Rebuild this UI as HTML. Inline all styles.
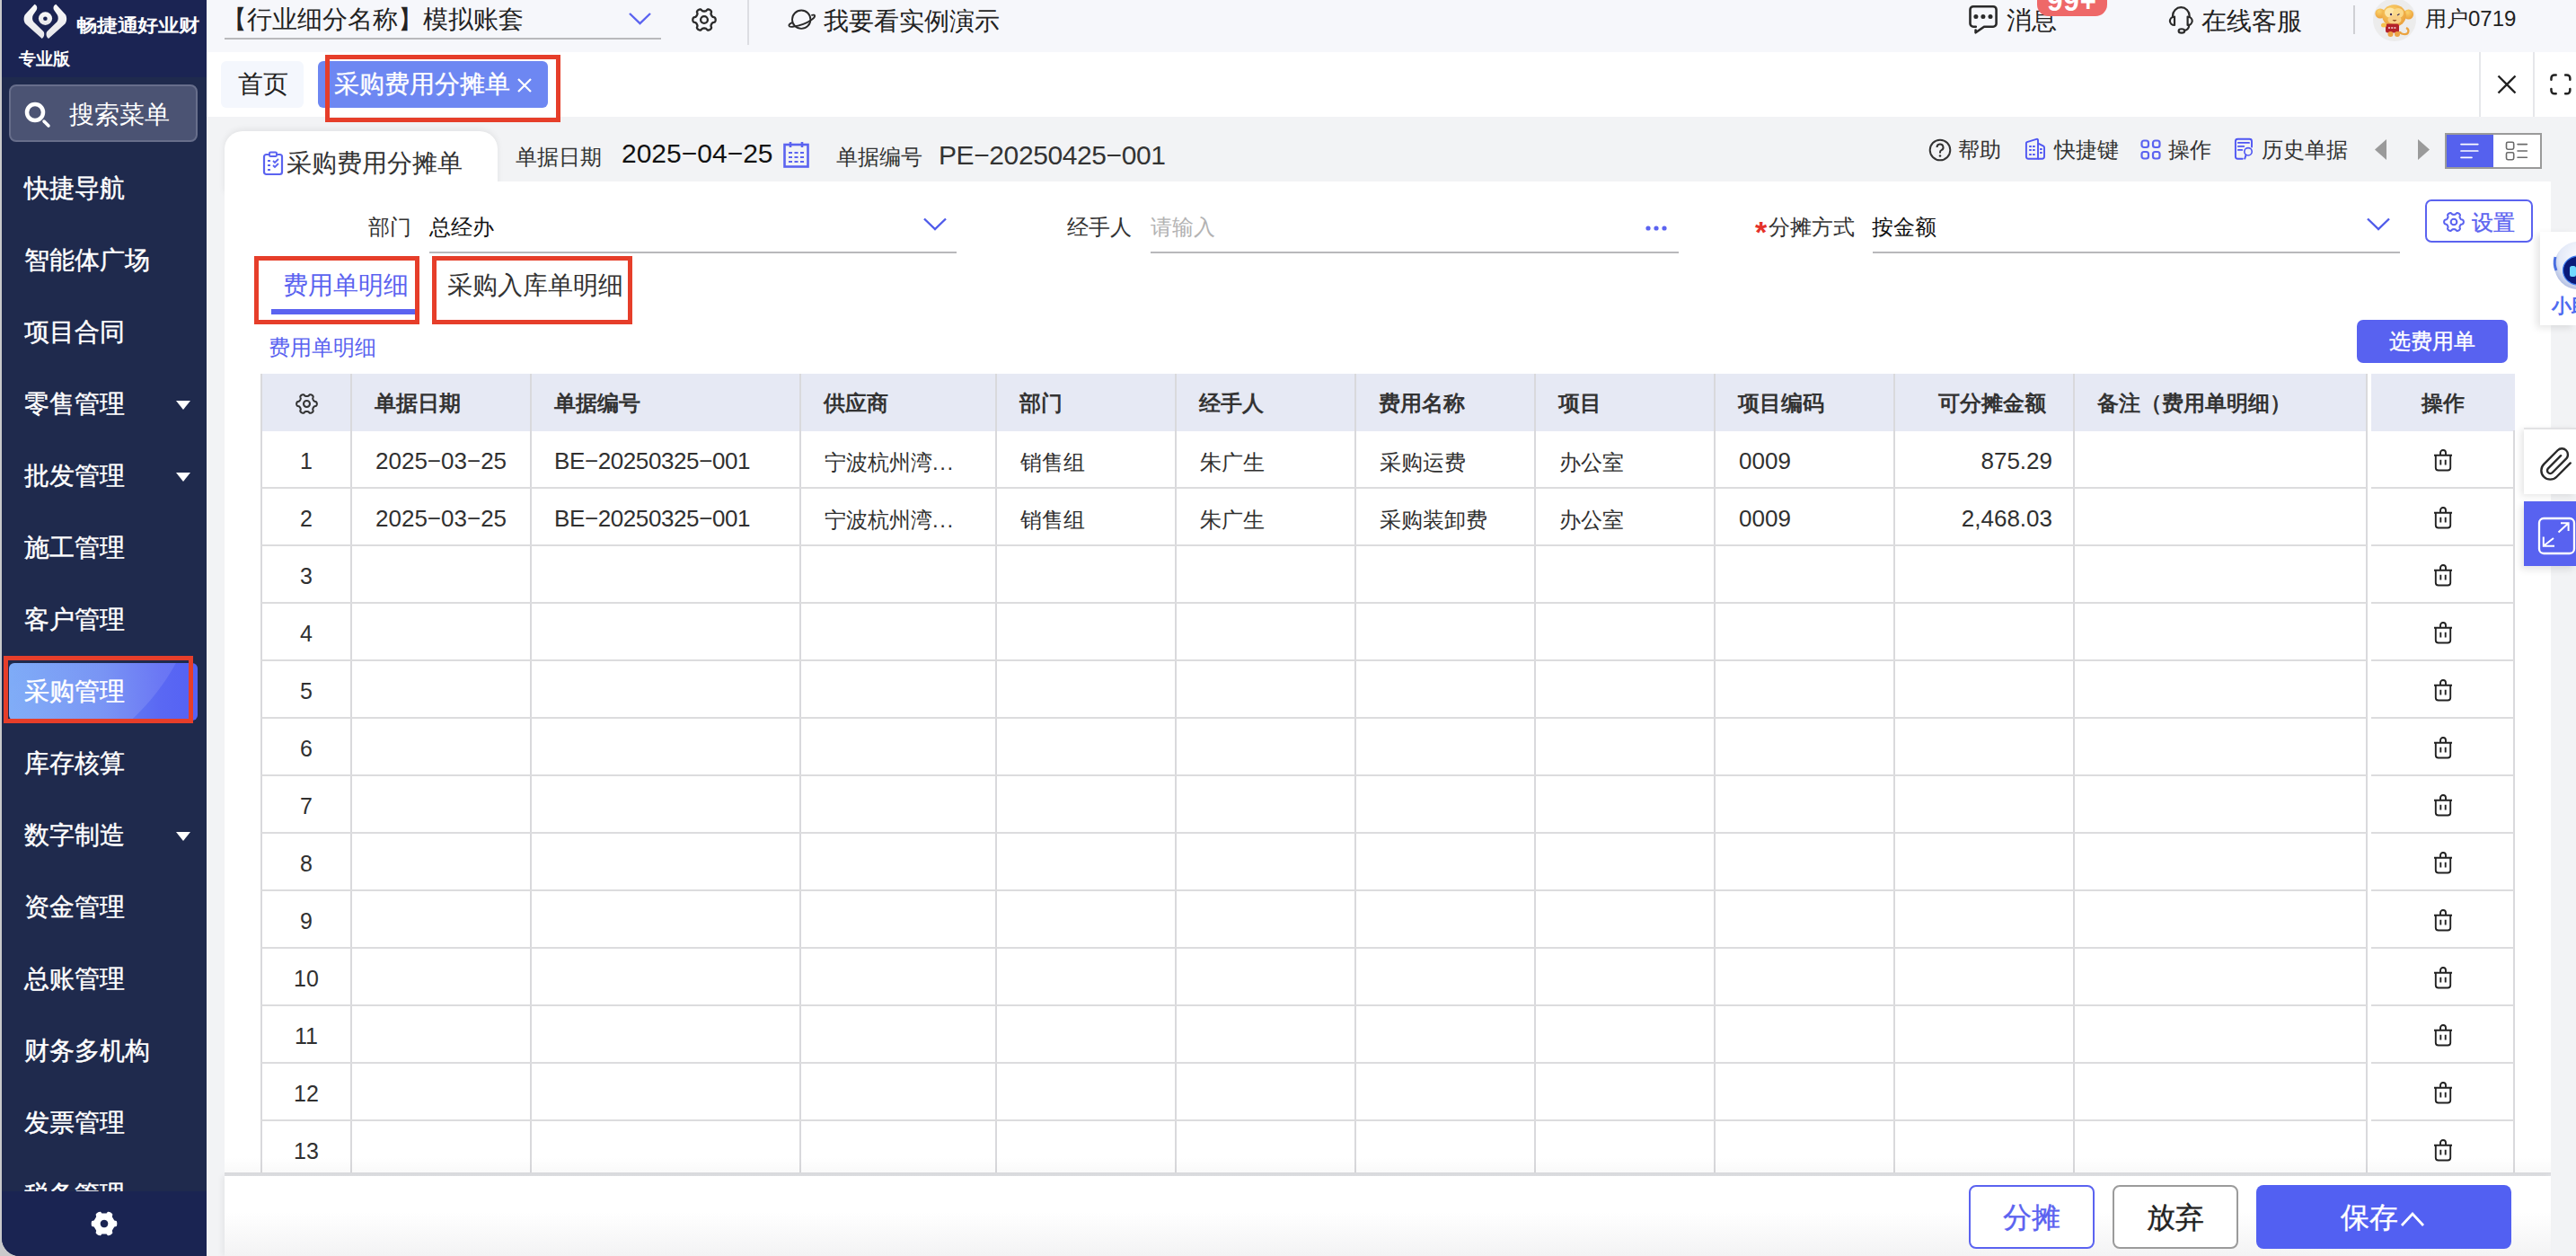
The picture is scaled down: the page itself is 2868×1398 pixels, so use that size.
<!DOCTYPE html>
<html><head><meta charset="utf-8">
<style>
*{margin:0;padding:0;box-sizing:border-box}
html,body{width:2868px;height:1398px;overflow:hidden;background:#f2f3f5;font-family:"Liberation Sans",sans-serif;color:#333;position:relative}
.a{position:absolute;white-space:nowrap}
.t28{font-size:28px;line-height:40px;height:40px}
.t24{font-size:24px;line-height:34px;height:34px}
.w{color:#fff}
.sbm{left:27px;color:#fff;font-size:28px;line-height:40px;height:40px;-webkit-text-stroke:0.4px #fff}
.car{position:absolute;left:196px;width:0;height:0;border-left:8px solid transparent;border-right:8px solid transparent;border-top:10px solid #fff}
.rb{position:absolute;border:5px solid #e63e2a}
</style></head><body>

<!-- SIDEBAR -->
<div class="a" style="left:0;top:0;width:230px;height:1398px;background:#c9c9cb"></div>
<div class="a" id="sb" style="left:2px;top:0;width:228px;height:1398px;background:#1f2a4d;border-bottom-left-radius:20px;overflow:hidden">
  <div class="a" style="left:0;top:0;width:228px;height:86px;background:#1b2453"></div>
  <div class="a" style="left:0;top:1326px;width:228px;height:72px;background:#1a2452"></div>
</div>
<!-- logo -->
<svg class="a" style="left:0;top:0" width="80" height="50" viewBox="0 0 80 50">
  <defs><linearGradient id="lg" x1="0" y1="0" x2="0" y2="1"><stop offset="0" stop-color="#fafafa"/><stop offset="1" stop-color="#e6e6ea"/></linearGradient></defs>
  <path d="M38.5 4.8 C40.8 5.6 42.2 8.6 40.6 11.2 L37 16.6 C35.7 18.6 35.7 22.4 37.3 24.3 L48.1 34.8 C50 36.8 49.6 41.2 46.8 42.9 L28.6 26.7 C26.1 24.2 26 18.6 28.1 16 Z" fill="url(#lg)"/>
  <path d="M62.3 4.8 C60 5.6 58.6 8.6 60.2 11.2 L63.8 16.6 C65.1 18.6 65.1 22.4 63.5 24.3 L52.7 34.8 C50.8 36.8 51.2 41.2 54 42.9 L72.2 26.7 C74.7 24.2 74.8 18.6 72.7 16 Z" fill="url(#lg)"/>
  <ellipse cx="50.5" cy="20.6" rx="7.6" ry="7.3" fill="url(#lg)"/>
  <circle cx="50.4" cy="20.7" r="2.3" fill="#1b2453"/>
</svg>
<div class="a w" style="left:85px;top:13px;font-size:23px;line-height:30px;font-weight:bold;transform:scaleY(0.86);transform-origin:0 15px;letter-spacing:-0.2px">畅捷通好业财</div>
<div class="a w" style="left:21px;top:52px;font-size:19px;line-height:28px;font-weight:bold">专业版</div>
<!-- search -->
<div class="a" style="left:10px;top:94px;width:210px;height:64px;border-radius:8px;background:#4b5373;border:2px solid #676e8b"></div>
<svg class="a" style="left:27px;top:113px" width="30" height="30" viewBox="0 0 30 30">
  <circle cx="12" cy="12" r="9" fill="none" stroke="#fff" stroke-width="4.5"/>
  <path d="M22 22 L27 27" stroke="#fff" stroke-width="3.5" stroke-linecap="round"/>
</svg>
<div class="a w t28" style="left:77px;top:108px">搜索菜单</div>

<!-- menu -->
<div class="a sbm" style="top:190px">快捷导航</div>
<div class="a sbm" style="top:270px">智能体广场</div>
<div class="a sbm" style="top:350px">项目合同</div>
<div class="a sbm" style="top:430px">零售管理</div><div class="car" style="top:446px"></div>
<div class="a sbm" style="top:510px">批发管理</div><div class="car" style="top:526px"></div>
<div class="a sbm" style="top:590px">施工管理</div>
<div class="a sbm" style="top:670px">客户管理</div>
<div class="a" style="left:10px;top:738px;width:210px;height:64px;border-radius:6px;background:linear-gradient(90deg,#6b9ff6 0%,#6685f3 50%,#5a68f3 80%,#5461f4 100%);overflow:hidden">
  <div class="a" style="left:-276px;top:-364px;width:492px;height:492px;border-radius:50%;background:radial-gradient(circle at 62% 90%,rgba(255,255,255,0.16) 0%,rgba(255,255,255,0.07) 45%,rgba(255,255,255,0.03) 100%)"></div>
</div>
<div class="a sbm" style="top:750px">采购管理</div>
<div class="rb" style="left:4px;top:730px;width:211px;height:75px"></div>
<div class="a sbm" style="top:830px">库存核算</div>
<div class="a sbm" style="top:910px">数字制造</div><div class="car" style="top:926px"></div>
<div class="a sbm" style="top:990px">资金管理</div>
<div class="a sbm" style="top:1070px">总账管理</div>
<div class="a sbm" style="top:1150px">财务多机构</div>
<div class="a sbm" style="top:1230px">发票管理</div>
<div class="a" style="left:2px;top:1310px;width:228px;height:16px;overflow:hidden"><div class="a sbm" style="left:25px;top:0px">税务管理</div></div>
<svg class="a" style="left:101px;top:1347px" width="30" height="30" viewBox="0 0 30 30"><path fill="#fff" fill-rule="evenodd" d="M29.3 15.0L29.3 14.4L29.2 13.8L29.1 13.1L28.9 12.6L28.6 12.0L27.5 11.7L26.4 11.4L26.0 11.0L25.7 10.6L25.5 10.1L25.2 9.7L25.0 9.2L24.7 8.8L24.5 8.4L24.2 7.9L24.0 7.5L23.8 7.0L24.1 5.9L24.4 4.8L24.0 4.2L23.6 3.7L23.2 3.3L22.7 2.9L22.2 2.6L21.6 2.3L21.0 2.1L20.4 1.9L19.8 1.8L19.2 1.7L18.3 2.5L17.6 3.4L17.0 3.5L16.5 3.5L16.0 3.5L15.5 3.5L15.0 3.5L14.5 3.5L14.0 3.5L13.5 3.5L13.0 3.5L12.4 3.4L11.7 2.5L10.8 1.7L10.2 1.8L9.6 1.9L9.0 2.1L8.4 2.3L7.9 2.6L7.3 2.9L6.8 3.3L6.4 3.7L6.0 4.2L5.6 4.8L5.9 5.9L6.2 7.0L6.0 7.5L5.8 7.9L5.5 8.4L5.3 8.8L5.0 9.2L4.8 9.7L4.5 10.1L4.3 10.6L4.0 11.0L3.6 11.4L2.5 11.7L1.4 12.0L1.1 12.6L0.9 13.1L0.8 13.8L0.7 14.4L0.7 15.0L0.7 15.6L0.8 16.2L0.9 16.9L1.1 17.4L1.4 18.0L2.5 18.3L3.6 18.6L4.0 19.0L4.3 19.4L4.5 19.9L4.8 20.3L5.0 20.8L5.3 21.2L5.5 21.6L5.8 22.1L6.0 22.5L6.2 23.0L5.9 24.1L5.6 25.2L6.0 25.8L6.4 26.3L6.8 26.7L7.3 27.1L7.8 27.4L8.4 27.7L9.0 27.9L9.6 28.1L10.2 28.2L10.8 28.3L11.7 27.5L12.4 26.6L13.0 26.5L13.5 26.5L14.0 26.5L14.5 26.5L15.0 26.5L15.5 26.5L16.0 26.5L16.5 26.5L17.0 26.5L17.6 26.6L18.3 27.5L19.2 28.3L19.8 28.2L20.4 28.1L21.0 27.9L21.6 27.7L22.1 27.4L22.7 27.1L23.2 26.7L23.6 26.3L24.0 25.8L24.4 25.2L24.1 24.1L23.8 23.0L24.0 22.5L24.2 22.1L24.5 21.6L24.7 21.2L25.0 20.7L25.2 20.3L25.5 19.9L25.7 19.4L26.0 19.0L26.4 18.6L27.5 18.3L28.6 18.0L28.9 17.4L29.1 16.9L29.2 16.2L29.3 15.6Z M15 10.7 a4.3 4.3 0 1 0 0.01 0Z"/></svg>

<!-- TOP BAR -->
<div class="a" style="left:230px;top:0;width:2638px;height:58px;background:#f6f7fb"></div>
<div class="a t28" style="left:247px;top:2px;color:#222">【行业细分名称】模拟账套</div>
<div class="a" style="left:250px;top:42px;width:486px;height:2px;background:#b9b9bc"></div>
<svg class="a" style="left:699px;top:12px" width="27" height="17" viewBox="0 0 27 17"><path d="M2 3 L13.5 14 L25 3" fill="none" stroke="#5b63f0" stroke-width="2.4"/></svg>
<svg class="a" style="left:770px;top:8px" width="28" height="28" viewBox="0 0 28 28"><path d="M26.7 14.0L26.6 13.3L26.5 12.7L26.2 12.1L25.8 11.5L24.7 11.1L23.7 10.9L23.2 10.5L22.8 10.1L22.5 9.7L22.2 9.2L22.0 8.8L21.8 8.3L21.6 7.8L21.5 7.2L21.8 6.2L22.1 5.1L21.8 4.4L21.4 3.8L20.9 3.4L20.4 3.0L19.7 2.7L19.1 2.5L18.4 2.5L17.7 2.5L16.9 3.3L16.1 4.1L15.5 4.3L15.0 4.4L14.5 4.5L14.0 4.5L13.5 4.5L13.0 4.4L12.5 4.3L11.9 4.1L11.1 3.3L10.3 2.5L9.6 2.5L8.9 2.5L8.3 2.7L7.7 3.0L7.1 3.4L6.6 3.8L6.2 4.4L5.9 5.1L6.2 6.2L6.5 7.2L6.4 7.8L6.2 8.3L6.0 8.8L5.8 9.2L5.5 9.7L5.2 10.1L4.8 10.5L4.3 10.9L3.3 11.1L2.2 11.5L1.8 12.1L1.5 12.7L1.4 13.3L1.3 14.0L1.4 14.7L1.5 15.3L1.8 15.9L2.2 16.5L3.3 16.9L4.3 17.1L4.8 17.5L5.2 17.9L5.5 18.3L5.8 18.7L6.0 19.2L6.2 19.7L6.4 20.2L6.5 20.8L6.2 21.8L5.9 22.9L6.2 23.6L6.6 24.2L7.1 24.6L7.6 25.0L8.3 25.3L8.9 25.5L9.6 25.5L10.3 25.5L11.1 24.7L11.9 23.9L12.5 23.7L13.0 23.6L13.5 23.5L14.0 23.5L14.5 23.5L15.0 23.6L15.5 23.7L16.1 23.9L16.9 24.7L17.7 25.5L18.4 25.5L19.1 25.5L19.7 25.3L20.4 25.0L20.9 24.6L21.4 24.2L21.8 23.6L22.1 22.9L21.8 21.8L21.5 20.8L21.6 20.2L21.8 19.7L22.0 19.2L22.2 18.7L22.5 18.3L22.8 17.9L23.2 17.5L23.7 17.1L24.7 16.9L25.8 16.5L26.2 15.9L26.5 15.3L26.6 14.7Z" fill="none" stroke="#2a2a2a" stroke-width="2.3" stroke-linejoin="round"/><circle cx="14" cy="14" r="3.9" fill="none" stroke="#2a2a2a" stroke-width="2.3"/></svg>
<div class="a" style="left:832px;top:0;width:2px;height:50px;background:#dcdde2"></div>
<svg class="a" style="left:876px;top:9px" width="34" height="26" viewBox="0 0 34 26">
  <circle cx="16.2" cy="12.7" r="10.2" fill="none" stroke="#2a2a2a" stroke-width="1.9"/>
  <path d="M5.5 16.3 C1 18.5 1.5 21.5 6.5 20.8 C12 20 22 17 27.5 13 C32.5 9.5 32 6.8 28 7.8" fill="none" stroke="#2a2a2a" stroke-width="1.9" stroke-linecap="round"/>
</svg>
<div class="a t28" style="left:917px;top:4px;color:#222">我要看实例演示</div>

<!-- top right -->
<svg class="a" style="left:2185px;top:0px" width="45" height="45" viewBox="0 0 45 45">
  <path d="M14.8 29.7 H12 a3.5 3.5 0 0 1 -3.5 -3.5 V10.7 a3.5 3.5 0 0 1 3.5 -3.5 H34.1 a3.5 3.5 0 0 1 3.5 3.5 V26.2 a3.5 3.5 0 0 1 -3.5 3.5 H24 L14.6 36.3 V33.6" fill="none" stroke="#2a2a2a" stroke-width="2.6" stroke-linecap="round" stroke-linejoin="round"/>
  <circle cx="14.9" cy="18.5" r="2.5" fill="#2a2a2a"/><circle cx="22.9" cy="18.5" r="2.5" fill="#2a2a2a"/><circle cx="31" cy="18.5" r="2.5" fill="#2a2a2a"/>
</svg>
<div class="a t28" style="left:2234px;top:3px;color:#222">消息</div>
<div class="a" style="left:2268px;top:-12px;width:78px;height:30px;border-radius:13px;background:#ee6868;overflow:hidden"><div class="a" style="left:0;top:-1px;width:78px;text-align:center;color:#fff;font-size:31px;font-weight:bold;line-height:30px;letter-spacing:1px">99+</div></div>
<svg class="a" style="left:2405px;top:0px" width="45" height="45" viewBox="0 0 45 45">
  <path d="M14 19.5 V17.5 a9.3 9.3 0 0 1 18.6 0 V19.5" fill="none" stroke="#2a2a2a" stroke-width="2.2"/>
  <path d="M16 18.6 V28 A5.1 4.7 0 0 1 16 18.6Z" fill="none" stroke="#2a2a2a" stroke-width="2.2" stroke-linejoin="round"/>
  <path d="M30.6 18.6 V28 A5.1 4.7 0 0 0 30.6 18.6Z" fill="none" stroke="#2a2a2a" stroke-width="2.2" stroke-linejoin="round"/>
  <path d="M32.3 28 Q31.8 33.2 26.8 34.2" fill="none" stroke="#2a2a2a" stroke-width="2.2"/>
  <ellipse cx="23.9" cy="34.4" rx="3.3" ry="2.2" fill="none" stroke="#2a2a2a" stroke-width="2.1"/>
</svg>
<div class="a t28" style="left:2451px;top:4px;color:#222">在线客服</div>
<div class="a" style="left:2620px;top:6px;width:2px;height:32px;background:#cfd0d4"></div>
<svg class="a" style="left:2642px;top:-2px" width="48" height="48" viewBox="0 0 48 48">
  <defs>
    <radialGradient id="mk" cx="0.4" cy="0.3" r="0.8"><stop offset="0" stop-color="#fbd36a"/><stop offset="1" stop-color="#e99a35"/></radialGradient>
  </defs>
  <circle cx="24" cy="24" r="24" fill="#ececec"/>
  <path d="M37 33 C41 35 40 41 34 40 C31 39.5 30 38 30 37" fill="none" stroke="#eba33f" stroke-width="2.2"/>
  <circle cx="8" cy="17" r="5.6" fill="url(#mk)"/><circle cx="39.5" cy="18" r="5.6" fill="url(#mk)"/>
  <ellipse cx="23.5" cy="19.5" rx="13.3" ry="12.3" fill="url(#mk)"/>
  <ellipse cx="19" cy="16" rx="6" ry="5.5" fill="#fde7a8"/><ellipse cx="28" cy="16.5" rx="6" ry="5.5" fill="#fbd98a"/>
  <ellipse cx="24" cy="24" rx="7.5" ry="5" fill="#f8cf86"/>
  <circle cx="20" cy="18" r="1.2" fill="#3b2b5a"/><path d="M27 19 L29.5 17.5" stroke="#3b2b5a" stroke-width="1.1"/>
  <path d="M21.5 24 Q24 27.5 26.5 24Z" fill="#9a5322"/>
  <rect x="14" y="28.5" width="15" height="10" rx="2.5" fill="#b4222a"/>
  <ellipse cx="12" cy="30" rx="3" ry="2.5" fill="#f6c24e"/>
  <ellipse cx="19.5" cy="40" rx="3" ry="3" fill="#eca346"/><ellipse cx="27" cy="40" rx="3" ry="3" fill="#eca346"/>
  <path d="M17 33 H26" stroke="#f3dede" stroke-width="1.3" stroke-dasharray="2 1.2"/>
</svg>
<div class="a t24" style="left:2700px;top:4px;color:#222">用户0719</div>

<!-- TAB BAR -->
<div class="a" style="left:230px;top:58px;width:2638px;height:72px;background:#fff"></div>
<div class="a" style="left:246px;top:68px;width:92px;height:52px;border-radius:6px;background:#f4f7fd"></div>
<div class="a t28" style="left:265px;top:74px;color:#222">首页</div>
<div class="a" style="left:354px;top:68px;width:256px;height:52px;border-radius:6px;background:#6d87f2"></div>
<div class="a t28 w" style="left:372px;top:74px;-webkit-text-stroke:0.3px #fff">采购费用分摊单</div>
<svg class="a" style="left:575px;top:86px" width="18" height="18" viewBox="0 0 18 18"><path d="M2 2 L16 16 M16 2 L2 16" stroke="#fff" stroke-width="2.2"/></svg>
<div class="rb" style="left:362px;top:61px;width:262px;height:75px"></div>
<div class="a" style="left:2760px;top:58px;width:2px;height:72px;background:#e6e7ea"></div>
<div class="a" style="left:2820px;top:58px;width:2px;height:72px;background:#e6e7ea"></div>
<svg class="a" style="left:2780px;top:83px" width="22" height="22" viewBox="0 0 22 22"><path d="M1.5 1.5 L20.5 20.5 M20.5 1.5 L1.5 20.5" stroke="#222" stroke-width="2.4"/></svg>
<svg class="a" style="left:2838px;top:81px" width="26" height="26" viewBox="0 0 26 26"><path d="M2.45 7.7 V5.95 a3.5 3.5 0 0 1 3.5 -3.5 H7.7 M18.1 2.45 H19.85 a3.5 3.5 0 0 1 3.5 3.5 V7.7 M23.35 18.1 V19.85 a3.5 3.5 0 0 1 -3.5 3.5 H18.1 M7.7 23.35 H5.95 a3.5 3.5 0 0 1 -3.5 -3.5 V18.1" fill="none" stroke="#222" stroke-width="2.5" stroke-linecap="round"/></svg>

<!-- CONTENT -->
<!--CONTENT_START-->
<!-- form header -->
<div class="a" style="left:250px;top:146px;width:304px;height:70px;border-radius:20px 20px 0 0;background:#fff;box-shadow:0 -2px 7px rgba(0,0,0,0.07)"></div>
<div class="a" style="left:250px;top:202px;width:2590px;height:1196px;background:#fff"></div>
<svg class="a" style="left:292px;top:168px" width="24" height="28" viewBox="0 0 24 28">
  <rect x="2" y="4" width="20" height="22" rx="2.5" fill="none" stroke="#5b63f0" stroke-width="2.2"/>
  <rect x="8" y="1.5" width="8" height="4.5" rx="1.2" fill="#fff" stroke="#5b63f0" stroke-width="2"/>
  <path d="M6 11 H9 M6 16 H9 M6 21 H9 M12 11 L14 13 L18 9 M12 16 L14 18 L18 14" fill="none" stroke="#5b63f0" stroke-width="1.8"/>
</svg>
<div class="a t28" style="left:319px;top:162px;color:#333">采购费用分摊单</div>
<div class="a t24" style="left:574px;top:158px;color:#333">单据日期</div>
<div class="a" style="left:692px;top:151px;font-size:30px;line-height:40px;color:#111">2025−04−25</div>
<svg class="a" style="left:872px;top:157px" width="29" height="30" viewBox="0 0 29 30">
  <rect x="1.5" y="4" width="26" height="24.5" fill="none" stroke="#5b63f0" stroke-width="2.6"/>
  <path d="M8 1 V7 M21 1 V7" stroke="#5b63f0" stroke-width="2.6"/>
  <path d="M6 13 H10 M12.5 13 H16.5 M19 13 H23 M6 18 H10 M12.5 18 H16.5 M19 18 H23 M6 23 H10 M12.5 23 H16.5 M19 23 H23" stroke="#5b63f0" stroke-width="2"/>
</svg>
<div class="a t24" style="left:931px;top:158px;color:#333">单据编号</div>
<div class="a" style="left:1045px;top:153px;font-size:30px;line-height:40px;color:#333;letter-spacing:-0.4px">PE−20250425−001</div>

<!-- tools -->
<svg class="a" style="left:2147px;top:154px" width="26" height="26" viewBox="0 0 26 26">
  <circle cx="13" cy="13" r="11.3" fill="none" stroke="#333" stroke-width="2"/>
  <path d="M9.5 10 a3.5 3.5 0 1 1 5 3.2 c-1 .5 -1.5 1.2 -1.5 2.3 V16.5" fill="none" stroke="#333" stroke-width="2"/>
  <circle cx="13" cy="19.5" r="1.3" fill="#333"/>
</svg>
<div class="a t24" style="left:2180px;top:150px;color:#333">帮助</div>
<svg class="a" style="left:2245px;top:148px" width="40" height="37" viewBox="0 0 40 37">
  <path d="M10.9 11.2 Q10.9 10.4 11.7 10.1 L22.4 6.9 Q24 6.4 24 8 V28.7 H13.4 Q10.9 28.7 10.9 26.2Z" fill="none" stroke="#4f56f2" stroke-width="1.9" stroke-linejoin="round"/>
  <path d="M24.2 11.6 L30.1 14.6 Q31 15.1 31 16.2 V26.2 Q31 28.7 28.5 28.7 H24" fill="none" stroke="#4f56f2" stroke-width="1.9" stroke-linejoin="round"/>
  <g fill="#4f56f2"><rect x="14.1" y="14" width="2.8" height="1.9" rx=".6"/><rect x="18" y="14" width="2.8" height="1.9" rx=".6"/><rect x="14.1" y="18" width="2.8" height="1.9" rx=".6"/><rect x="18" y="18" width="2.8" height="1.9" rx=".6"/><rect x="14.1" y="23" width="2.8" height="1.9" rx=".6"/><rect x="18" y="23" width="2.8" height="1.9" rx=".6"/><rect x="26" y="17" width="2.8" height="1.9" rx=".6"/><rect x="26" y="21" width="2.8" height="1.9" rx=".6"/></g>
</svg>
<div class="a t24" style="left:2287px;top:150px;color:#333">快捷键</div>
<svg class="a" style="left:2383px;top:155px" width="23" height="23" viewBox="0 0 23 23">
  <rect x="1.5" y="1.5" width="7.5" height="7.5" rx="2.5" fill="none" stroke="#5b63f0" stroke-width="2.2"/>
  <rect x="14" y="1.5" width="7.5" height="7.5" rx="2.5" fill="none" stroke="#5b63f0" stroke-width="2.2"/>
  <rect x="1.5" y="14" width="7.5" height="7.5" rx="2.5" fill="none" stroke="#5b63f0" stroke-width="2.2"/>
  <rect x="14" y="14" width="7.5" height="7.5" rx="2.5" fill="none" stroke="#5b63f0" stroke-width="2.2"/>
</svg>
<div class="a t24" style="left:2414px;top:150px;color:#333">操作</div>
<svg class="a" style="left:2480px;top:148px" width="40" height="37" viewBox="0 0 40 37">
  <path d="M16.8 28.8 H11.4 a2.5 2.5 0 0 1 -2.5 -2.5 V9.3 a2.5 2.5 0 0 1 2.5 -2.5 H24.5 a2.5 2.5 0 0 1 2.5 2.5 V15.6" fill="none" stroke="#4f56f2" stroke-width="1.9" stroke-linecap="round"/>
  <path d="M11.9 10.9 H24 M11.9 14.9 H18.2 M11.9 18.9 H16.2" stroke="#4f56f2" stroke-width="1.9" stroke-linecap="round"/>
  <circle cx="23" cy="20.8" r="4.2" fill="none" stroke="#4f56f2" stroke-width="1.6"/>
  <path d="M20.6 24.4 L19.2 28.6" stroke="#4f56f2" stroke-width="1.9" stroke-linecap="round"/>
</svg>
<div class="a t24" style="left:2518px;top:150px;color:#333">历史单据</div>
<svg class="a" style="left:2643px;top:154px" width="15" height="25" viewBox="0 0 15 25"><path d="M14 1 V24 L1 12.5Z" fill="#9a9a9a"/></svg>
<svg class="a" style="left:2691px;top:154px" width="15" height="25" viewBox="0 0 15 25"><path d="M1 1 V24 L14 12.5Z" fill="#9a9a9a"/></svg>
<div class="a" style="left:2722px;top:148px;width:108px;height:40px;border:2px solid #9a9a9a;background:#fff"></div>
<div class="a" style="left:2724px;top:150px;width:52px;height:36px;background:#5561ee"></div>
<svg class="a" style="left:2736px;top:150px" width="30" height="34" viewBox="0 0 30 34"><path d="M4 10.6 H22.8 M4 18 H22.8 M4 25.3 H16" stroke="#fff" stroke-width="1.7" stroke-linecap="round"/></svg>
<svg class="a" style="left:2786px;top:150px" width="32" height="34" viewBox="0 0 32 34"><rect x="4.5" y="8.3" width="8.2" height="7.9" rx="1.6" fill="none" stroke="#6a6a6a" stroke-width="1.6"/><rect x="4.5" y="19.7" width="8.2" height="8" rx="1.6" fill="none" stroke="#6a6a6a" stroke-width="1.6"/><path d="M17 10.6 H27.4 M17 18 H27.4 M17 25.3 H27.4" stroke="#6a6a6a" stroke-width="1.6" stroke-linecap="round"/></svg>

<!-- form row -->
<div class="a t24" style="left:410px;top:236px;color:#333">部门</div>
<div class="a t24" style="left:478px;top:236px;color:#111">总经办</div>
<div class="a" style="left:478px;top:280px;width:587px;height:2px;background:#b8b8bb"></div>
<svg class="a" style="left:1027px;top:241px" width="28" height="17" viewBox="0 0 28 17"><path d="M2 2.5 L14 14 L26 2.5" fill="none" stroke="#4f5bea" stroke-width="2.4"/></svg>
<div class="a t24" style="left:1188px;top:236px;color:#333">经手人</div>
<div class="a t24" style="left:1281px;top:236px;color:#b3b3b3">请输入</div>
<div class="a" style="left:1281px;top:280px;width:588px;height:2px;background:#b8b8bb"></div>
<svg class="a" style="left:1832px;top:250px" width="24" height="8" viewBox="0 0 24 8"><circle cx="3" cy="4" r="2.6" fill="#5b63f0"/><circle cx="12" cy="4" r="2.6" fill="#5b63f0"/><circle cx="21" cy="4" r="2.6" fill="#5b63f0"/></svg>
<div class="a" style="left:1954px;top:238px;font-size:34px;line-height:40px;color:#e5322a;font-weight:bold">*</div>
<div class="a t24" style="left:1969px;top:236px;color:#333">分摊方式</div>
<div class="a t24" style="left:2084px;top:236px;color:#111">按金额</div>
<div class="a" style="left:2085px;top:280px;width:587px;height:2px;background:#b8b8bb"></div>
<svg class="a" style="left:2634px;top:241px" width="28" height="17" viewBox="0 0 28 17"><path d="M2 2.5 L14 14 L26 2.5" fill="none" stroke="#4f5bea" stroke-width="2.4"/></svg>
<div class="a" style="left:2700px;top:222px;width:120px;height:48px;border:2px solid #5b63f0;border-radius:7px;background:#fff"></div>
<svg class="a" style="left:2720px;top:235px" width="24" height="24" viewBox="0 0 28 28"><path d="M26.7 14.0L26.6 13.3L26.5 12.7L26.2 12.1L25.8 11.5L24.7 11.1L23.7 10.9L23.2 10.5L22.8 10.1L22.5 9.7L22.2 9.2L22.0 8.8L21.8 8.3L21.6 7.8L21.5 7.2L21.8 6.2L22.1 5.1L21.8 4.4L21.4 3.8L20.9 3.4L20.4 3.0L19.7 2.7L19.1 2.5L18.4 2.5L17.7 2.5L16.9 3.3L16.1 4.1L15.5 4.3L15.0 4.4L14.5 4.5L14.0 4.5L13.5 4.5L13.0 4.4L12.5 4.3L11.9 4.1L11.1 3.3L10.3 2.5L9.6 2.5L8.9 2.5L8.3 2.7L7.7 3.0L7.1 3.4L6.6 3.8L6.2 4.4L5.9 5.1L6.2 6.2L6.5 7.2L6.4 7.8L6.2 8.3L6.0 8.8L5.8 9.2L5.5 9.7L5.2 10.1L4.8 10.5L4.3 10.9L3.3 11.1L2.2 11.5L1.8 12.1L1.5 12.7L1.4 13.3L1.3 14.0L1.4 14.7L1.5 15.3L1.8 15.9L2.2 16.5L3.3 16.9L4.3 17.1L4.8 17.5L5.2 17.9L5.5 18.3L5.8 18.7L6.0 19.2L6.2 19.7L6.4 20.2L6.5 20.8L6.2 21.8L5.9 22.9L6.2 23.6L6.6 24.2L7.1 24.6L7.6 25.0L8.3 25.3L8.9 25.5L9.6 25.5L10.3 25.5L11.1 24.7L11.9 23.9L12.5 23.7L13.0 23.6L13.5 23.5L14.0 23.5L14.5 23.5L15.0 23.6L15.5 23.7L16.1 23.9L16.9 24.7L17.7 25.5L18.4 25.5L19.1 25.5L19.7 25.3L20.4 25.0L20.9 24.6L21.4 24.2L21.8 23.6L22.1 22.9L21.8 21.8L21.5 20.8L21.6 20.2L21.8 19.7L22.0 19.2L22.2 18.7L22.5 18.3L22.8 17.9L23.2 17.5L23.7 17.1L24.7 16.9L25.8 16.5L26.2 15.9L26.5 15.3L26.6 14.7Z" fill="none" stroke="#5b63f0" stroke-width="2.4" stroke-linejoin="round"/><circle cx="14" cy="14" r="3.9" fill="none" stroke="#5b63f0" stroke-width="2.4"/></svg>
<div class="a t24" style="left:2752px;top:231px;color:#5b63f0;-webkit-text-stroke:0.35px #5b63f0">设置</div>

<!-- detail tabs -->
<div class="a t28" style="left:315px;top:298px;color:#5b63f0">费用单明细</div>
<div class="a" style="left:302px;top:344px;width:164px;height:6px;background:#5b63f0"></div>
<div class="rb" style="left:283px;top:285px;width:184px;height:76px"></div>
<div class="a t28" style="left:498px;top:298px;color:#333">采购入库单明细</div>
<div class="rb" style="left:481px;top:285px;width:223px;height:76px"></div>
<div class="a t24" style="left:299px;top:370px;color:#5b63f0">费用单明细</div>
<div class="a" style="left:2624px;top:356px;width:168px;height:48px;border-radius:7px;background:#5862f0"></div>
<div class="a t24 w" style="left:2660px;top:363px;-webkit-text-stroke:0.35px #fff">选费用单</div>
<div class="a" style="left:250px;top:416px;width:2590px;height:890px;overflow:hidden">
<div class="a" style="left:40px;top:0px;width:2345px;height:64px;background:#e6e9f4"></div>
<div class="a" style="left:2390px;top:0px;width:160px;height:64px;background:#e6e9f4"></div>
<div class="a" style="left:40px;top:0px;width:2px;height:1000px;background:#d9d9dc"></div>
<div class="a" style="left:140px;top:0px;width:2px;height:1000px;background:#d9d9dc"></div>
<div class="a" style="left:340px;top:0px;width:2px;height:1000px;background:#d9d9dc"></div>
<div class="a" style="left:640px;top:0px;width:2px;height:1000px;background:#d9d9dc"></div>
<div class="a" style="left:858px;top:0px;width:2px;height:1000px;background:#d9d9dc"></div>
<div class="a" style="left:1058px;top:0px;width:2px;height:1000px;background:#d9d9dc"></div>
<div class="a" style="left:1258px;top:0px;width:2px;height:1000px;background:#d9d9dc"></div>
<div class="a" style="left:1458px;top:0px;width:2px;height:1000px;background:#d9d9dc"></div>
<div class="a" style="left:1658px;top:0px;width:2px;height:1000px;background:#d9d9dc"></div>
<div class="a" style="left:1858px;top:0px;width:2px;height:1000px;background:#d9d9dc"></div>
<div class="a" style="left:2058px;top:0px;width:2px;height:1000px;background:#d9d9dc"></div>
<div class="a" style="left:2384px;top:0px;width:2px;height:1000px;background:#d9d9dc"></div>
<div class="a" style="left:2548px;top:63px;width:2px;height:1000px;background:#d9d9dc"></div>
<div class="a" style="left:41px;top:126px;width:2344px;height:2px;background:#dcdcde"></div>
<div class="a" style="left:2390px;top:126px;width:159px;height:2px;background:#dcdcde"></div>
<div class="a" style="left:41px;top:190px;width:2344px;height:2px;background:#dcdcde"></div>
<div class="a" style="left:2390px;top:190px;width:159px;height:2px;background:#dcdcde"></div>
<div class="a" style="left:41px;top:254px;width:2344px;height:2px;background:#dcdcde"></div>
<div class="a" style="left:2390px;top:254px;width:159px;height:2px;background:#dcdcde"></div>
<div class="a" style="left:41px;top:318px;width:2344px;height:2px;background:#dcdcde"></div>
<div class="a" style="left:2390px;top:318px;width:159px;height:2px;background:#dcdcde"></div>
<div class="a" style="left:41px;top:382px;width:2344px;height:2px;background:#dcdcde"></div>
<div class="a" style="left:2390px;top:382px;width:159px;height:2px;background:#dcdcde"></div>
<div class="a" style="left:41px;top:446px;width:2344px;height:2px;background:#dcdcde"></div>
<div class="a" style="left:2390px;top:446px;width:159px;height:2px;background:#dcdcde"></div>
<div class="a" style="left:41px;top:510px;width:2344px;height:2px;background:#dcdcde"></div>
<div class="a" style="left:2390px;top:510px;width:159px;height:2px;background:#dcdcde"></div>
<div class="a" style="left:41px;top:574px;width:2344px;height:2px;background:#dcdcde"></div>
<div class="a" style="left:2390px;top:574px;width:159px;height:2px;background:#dcdcde"></div>
<div class="a" style="left:41px;top:638px;width:2344px;height:2px;background:#dcdcde"></div>
<div class="a" style="left:2390px;top:638px;width:159px;height:2px;background:#dcdcde"></div>
<div class="a" style="left:41px;top:702px;width:2344px;height:2px;background:#dcdcde"></div>
<div class="a" style="left:2390px;top:702px;width:159px;height:2px;background:#dcdcde"></div>
<div class="a" style="left:41px;top:766px;width:2344px;height:2px;background:#dcdcde"></div>
<div class="a" style="left:2390px;top:766px;width:159px;height:2px;background:#dcdcde"></div>
<div class="a" style="left:41px;top:830px;width:2344px;height:2px;background:#dcdcde"></div>
<div class="a" style="left:2390px;top:830px;width:159px;height:2px;background:#dcdcde"></div>
<div class="a" style="left:41px;top:894px;width:2344px;height:2px;background:#dcdcde"></div>
<div class="a" style="left:2390px;top:894px;width:159px;height:2px;background:#dcdcde"></div>
<div class="a" style="left:41px;top:958px;width:2344px;height:2px;background:#dcdcde"></div>
<div class="a" style="left:2390px;top:958px;width:159px;height:2px;background:#dcdcde"></div>
<div class="a t24" style="left:167px;top:16px;font-weight:bold;color:#333">单据日期</div>
<div class="a t24" style="left:367px;top:16px;font-weight:bold;color:#333">单据编号</div>
<div class="a t24" style="left:667px;top:16px;font-weight:bold;color:#333">供应商</div>
<div class="a t24" style="left:885px;top:16px;font-weight:bold;color:#333">部门</div>
<div class="a t24" style="left:1085px;top:16px;font-weight:bold;color:#333">经手人</div>
<div class="a t24" style="left:1285px;top:16px;font-weight:bold;color:#333">费用名称</div>
<div class="a t24" style="left:1485px;top:16px;font-weight:bold;color:#333">项目</div>
<div class="a t24" style="left:1685px;top:16px;font-weight:bold;color:#333">项目编码</div>
<div class="a t24" style="left:1859px;top:16px;width:169px;text-align:right;font-weight:bold;color:#333">可分摊金额</div>
<div class="a t24" style="left:2085px;top:16px;font-weight:bold;color:#333">备注（费用单明细）</div>
<div class="a t24" style="left:2390px;top:16px;width:160px;text-align:center;font-weight:bold;color:#333">操作</div>
<svg class="a" style="left:79px;top:21px" width="25" height="25" viewBox="0 0 28 28"><path d="M26.7 14.0L26.6 13.3L26.5 12.7L26.2 12.1L25.8 11.5L24.7 11.1L23.7 10.9L23.2 10.5L22.8 10.1L22.5 9.7L22.2 9.2L22.0 8.8L21.8 8.3L21.6 7.8L21.5 7.2L21.8 6.2L22.1 5.1L21.8 4.4L21.4 3.8L20.9 3.4L20.4 3.0L19.7 2.7L19.1 2.5L18.4 2.5L17.7 2.5L16.9 3.3L16.1 4.1L15.5 4.3L15.0 4.4L14.5 4.5L14.0 4.5L13.5 4.5L13.0 4.4L12.5 4.3L11.9 4.1L11.1 3.3L10.3 2.5L9.6 2.5L8.9 2.5L8.3 2.7L7.7 3.0L7.1 3.4L6.6 3.8L6.2 4.4L5.9 5.1L6.2 6.2L6.5 7.2L6.4 7.8L6.2 8.3L6.0 8.8L5.8 9.2L5.5 9.7L5.2 10.1L4.8 10.5L4.3 10.9L3.3 11.1L2.2 11.5L1.8 12.1L1.5 12.7L1.4 13.3L1.3 14.0L1.4 14.7L1.5 15.3L1.8 15.9L2.2 16.5L3.3 16.9L4.3 17.1L4.8 17.5L5.2 17.9L5.5 18.3L5.8 18.7L6.0 19.2L6.2 19.7L6.4 20.2L6.5 20.8L6.2 21.8L5.9 22.9L6.2 23.6L6.6 24.2L7.1 24.6L7.6 25.0L8.3 25.3L8.9 25.5L9.6 25.5L10.3 25.5L11.1 24.7L11.9 23.9L12.5 23.7L13.0 23.6L13.5 23.5L14.0 23.5L14.5 23.5L15.0 23.6L15.5 23.7L16.1 23.9L16.9 24.7L17.7 25.5L18.4 25.5L19.1 25.5L19.7 25.3L20.4 25.0L20.9 24.6L21.4 24.2L21.8 23.6L22.1 22.9L21.8 21.8L21.5 20.8L21.6 20.2L21.8 19.7L22.0 19.2L22.2 18.7L22.5 18.3L22.8 17.9L23.2 17.5L23.7 17.1L24.7 16.9L25.8 16.5L26.2 15.9L26.5 15.3L26.6 14.7Z" fill="none" stroke="#333" stroke-width="2.3" stroke-linejoin="round"/><circle cx="14" cy="14" r="3.9" fill="none" stroke="#333" stroke-width="2.3"/></svg>
<div class="a t24" style="left:41px;top:80px;width:100px;text-align:center;color:#303030;font-size:25px">1</div>
<div class="a t24" style="left:168px;top:80px;color:#303030;font-size:26px">2025−03−25</div>
<div class="a t24" style="left:368px;top:80px;color:#303030;font-size:26px;letter-spacing:-0.4px;margin-left:-1px">BE−20250325−001</div>
<div class="a t24" style="left:668px;top:82px;color:#303030">宁波杭州湾<span style="letter-spacing:1.6px">...</span></div>
<div class="a t24" style="left:886px;top:82px;color:#303030">销售组</div>
<div class="a t24" style="left:1086px;top:82px;color:#303030">朱广生</div>
<div class="a t24" style="left:1286px;top:82px;color:#303030">采购运费</div>
<div class="a t24" style="left:1486px;top:82px;color:#303030">办公室</div>
<div class="a t24" style="left:1686px;top:80px;color:#303030;font-size:26px">0009</div>
<div class="a t24" style="left:1859px;top:80px;width:176px;text-align:right;color:#303030;font-size:26px">875.29</div>
<svg class="a" style="left:2459px;top:84px" width="22" height="25" viewBox="0 0 22 25"><path d="M1 6.8 H21 M8 6.8 V4 a3 3 0 0 1 6 0 V6.8 M2.8 6.8 V20.5 a3 3 0 0 0 3 3 H16.2 a3 3 0 0 0 3 -3 V6.8 M8.3 11.8 V17.6 M13.7 11.8 V17.6" fill="none" stroke="#222" stroke-width="1.9"/></svg>
<div class="a t24" style="left:41px;top:144px;width:100px;text-align:center;color:#303030;font-size:25px">2</div>
<div class="a t24" style="left:168px;top:144px;color:#303030;font-size:26px">2025−03−25</div>
<div class="a t24" style="left:368px;top:144px;color:#303030;font-size:26px;letter-spacing:-0.4px;margin-left:-1px">BE−20250325−001</div>
<div class="a t24" style="left:668px;top:146px;color:#303030">宁波杭州湾<span style="letter-spacing:1.6px">...</span></div>
<div class="a t24" style="left:886px;top:146px;color:#303030">销售组</div>
<div class="a t24" style="left:1086px;top:146px;color:#303030">朱广生</div>
<div class="a t24" style="left:1286px;top:146px;color:#303030">采购装卸费</div>
<div class="a t24" style="left:1486px;top:146px;color:#303030">办公室</div>
<div class="a t24" style="left:1686px;top:144px;color:#303030;font-size:26px">0009</div>
<div class="a t24" style="left:1859px;top:144px;width:176px;text-align:right;color:#303030;font-size:26px">2,468.03</div>
<svg class="a" style="left:2459px;top:148px" width="22" height="25" viewBox="0 0 22 25"><path d="M1 6.8 H21 M8 6.8 V4 a3 3 0 0 1 6 0 V6.8 M2.8 6.8 V20.5 a3 3 0 0 0 3 3 H16.2 a3 3 0 0 0 3 -3 V6.8 M8.3 11.8 V17.6 M13.7 11.8 V17.6" fill="none" stroke="#222" stroke-width="1.9"/></svg>
<div class="a t24" style="left:41px;top:208px;width:100px;text-align:center;color:#303030;font-size:25px">3</div>
<svg class="a" style="left:2459px;top:212px" width="22" height="25" viewBox="0 0 22 25"><path d="M1 6.8 H21 M8 6.8 V4 a3 3 0 0 1 6 0 V6.8 M2.8 6.8 V20.5 a3 3 0 0 0 3 3 H16.2 a3 3 0 0 0 3 -3 V6.8 M8.3 11.8 V17.6 M13.7 11.8 V17.6" fill="none" stroke="#222" stroke-width="1.9"/></svg>
<div class="a t24" style="left:41px;top:272px;width:100px;text-align:center;color:#303030;font-size:25px">4</div>
<svg class="a" style="left:2459px;top:276px" width="22" height="25" viewBox="0 0 22 25"><path d="M1 6.8 H21 M8 6.8 V4 a3 3 0 0 1 6 0 V6.8 M2.8 6.8 V20.5 a3 3 0 0 0 3 3 H16.2 a3 3 0 0 0 3 -3 V6.8 M8.3 11.8 V17.6 M13.7 11.8 V17.6" fill="none" stroke="#222" stroke-width="1.9"/></svg>
<div class="a t24" style="left:41px;top:336px;width:100px;text-align:center;color:#303030;font-size:25px">5</div>
<svg class="a" style="left:2459px;top:340px" width="22" height="25" viewBox="0 0 22 25"><path d="M1 6.8 H21 M8 6.8 V4 a3 3 0 0 1 6 0 V6.8 M2.8 6.8 V20.5 a3 3 0 0 0 3 3 H16.2 a3 3 0 0 0 3 -3 V6.8 M8.3 11.8 V17.6 M13.7 11.8 V17.6" fill="none" stroke="#222" stroke-width="1.9"/></svg>
<div class="a t24" style="left:41px;top:400px;width:100px;text-align:center;color:#303030;font-size:25px">6</div>
<svg class="a" style="left:2459px;top:404px" width="22" height="25" viewBox="0 0 22 25"><path d="M1 6.8 H21 M8 6.8 V4 a3 3 0 0 1 6 0 V6.8 M2.8 6.8 V20.5 a3 3 0 0 0 3 3 H16.2 a3 3 0 0 0 3 -3 V6.8 M8.3 11.8 V17.6 M13.7 11.8 V17.6" fill="none" stroke="#222" stroke-width="1.9"/></svg>
<div class="a t24" style="left:41px;top:464px;width:100px;text-align:center;color:#303030;font-size:25px">7</div>
<svg class="a" style="left:2459px;top:468px" width="22" height="25" viewBox="0 0 22 25"><path d="M1 6.8 H21 M8 6.8 V4 a3 3 0 0 1 6 0 V6.8 M2.8 6.8 V20.5 a3 3 0 0 0 3 3 H16.2 a3 3 0 0 0 3 -3 V6.8 M8.3 11.8 V17.6 M13.7 11.8 V17.6" fill="none" stroke="#222" stroke-width="1.9"/></svg>
<div class="a t24" style="left:41px;top:528px;width:100px;text-align:center;color:#303030;font-size:25px">8</div>
<svg class="a" style="left:2459px;top:532px" width="22" height="25" viewBox="0 0 22 25"><path d="M1 6.8 H21 M8 6.8 V4 a3 3 0 0 1 6 0 V6.8 M2.8 6.8 V20.5 a3 3 0 0 0 3 3 H16.2 a3 3 0 0 0 3 -3 V6.8 M8.3 11.8 V17.6 M13.7 11.8 V17.6" fill="none" stroke="#222" stroke-width="1.9"/></svg>
<div class="a t24" style="left:41px;top:592px;width:100px;text-align:center;color:#303030;font-size:25px">9</div>
<svg class="a" style="left:2459px;top:596px" width="22" height="25" viewBox="0 0 22 25"><path d="M1 6.8 H21 M8 6.8 V4 a3 3 0 0 1 6 0 V6.8 M2.8 6.8 V20.5 a3 3 0 0 0 3 3 H16.2 a3 3 0 0 0 3 -3 V6.8 M8.3 11.8 V17.6 M13.7 11.8 V17.6" fill="none" stroke="#222" stroke-width="1.9"/></svg>
<div class="a t24" style="left:41px;top:656px;width:100px;text-align:center;color:#303030;font-size:25px">10</div>
<svg class="a" style="left:2459px;top:660px" width="22" height="25" viewBox="0 0 22 25"><path d="M1 6.8 H21 M8 6.8 V4 a3 3 0 0 1 6 0 V6.8 M2.8 6.8 V20.5 a3 3 0 0 0 3 3 H16.2 a3 3 0 0 0 3 -3 V6.8 M8.3 11.8 V17.6 M13.7 11.8 V17.6" fill="none" stroke="#222" stroke-width="1.9"/></svg>
<div class="a t24" style="left:41px;top:720px;width:100px;text-align:center;color:#303030;font-size:25px">11</div>
<svg class="a" style="left:2459px;top:724px" width="22" height="25" viewBox="0 0 22 25"><path d="M1 6.8 H21 M8 6.8 V4 a3 3 0 0 1 6 0 V6.8 M2.8 6.8 V20.5 a3 3 0 0 0 3 3 H16.2 a3 3 0 0 0 3 -3 V6.8 M8.3 11.8 V17.6 M13.7 11.8 V17.6" fill="none" stroke="#222" stroke-width="1.9"/></svg>
<div class="a t24" style="left:41px;top:784px;width:100px;text-align:center;color:#303030;font-size:25px">12</div>
<svg class="a" style="left:2459px;top:788px" width="22" height="25" viewBox="0 0 22 25"><path d="M1 6.8 H21 M8 6.8 V4 a3 3 0 0 1 6 0 V6.8 M2.8 6.8 V20.5 a3 3 0 0 0 3 3 H16.2 a3 3 0 0 0 3 -3 V6.8 M8.3 11.8 V17.6 M13.7 11.8 V17.6" fill="none" stroke="#222" stroke-width="1.9"/></svg>
<div class="a t24" style="left:41px;top:848px;width:100px;text-align:center;color:#303030;font-size:25px">13</div>
<svg class="a" style="left:2459px;top:852px" width="22" height="25" viewBox="0 0 22 25"><path d="M1 6.8 H21 M8 6.8 V4 a3 3 0 0 1 6 0 V6.8 M2.8 6.8 V20.5 a3 3 0 0 0 3 3 H16.2 a3 3 0 0 0 3 -3 V6.8 M8.3 11.8 V17.6 M13.7 11.8 V17.6" fill="none" stroke="#222" stroke-width="1.9"/></svg>
<div class="a t24" style="left:41px;top:912px;width:100px;text-align:center;color:#303030;font-size:25px">14</div>
<svg class="a" style="left:2459px;top:916px" width="22" height="25" viewBox="0 0 22 25"><path d="M1 6.8 H21 M8 6.8 V4 a3 3 0 0 1 6 0 V6.8 M2.8 6.8 V20.5 a3 3 0 0 0 3 3 H16.2 a3 3 0 0 0 3 -3 V6.8 M8.3 11.8 V17.6 M13.7 11.8 V17.6" fill="none" stroke="#222" stroke-width="1.9"/></svg>
</div>

<!-- footer -->
<div class="a" style="left:250px;top:1288px;width:2590px;height:18px;background:linear-gradient(180deg,rgba(0,0,0,0) 0%,rgba(0,0,0,0.025) 100%)"></div>
<div class="a" style="left:250px;top:1305px;width:2590px;height:5px;background:linear-gradient(180deg,#d8d9dc 0%,#e4e5e8 100%)"></div>
<div class="a" style="left:250px;top:1309px;width:2590px;height:89px;background:linear-gradient(180deg,#ffffff 45%,#f3f3f4 100%);box-shadow:-3px 0 6px rgba(0,0,0,0.05)"></div>
<div class="a" style="left:2192px;top:1319px;width:140px;height:71px;border:2px solid #5b63f0;border-radius:8px;background:#fff"></div>
<div class="a" style="left:2230px;top:1334px;font-size:32px;line-height:42px;color:#5b63f0;-webkit-text-stroke:0.35px #5b63f0">分摊</div>
<div class="a" style="left:2352px;top:1319px;width:140px;height:71px;border:2px solid #9b9b9b;border-radius:8px;background:#fff"></div>
<div class="a" style="left:2390px;top:1334px;font-size:32px;line-height:42px;color:#222;-webkit-text-stroke:0.35px #222">放弃</div>
<div class="a" style="left:2512px;top:1319px;width:284px;height:71px;border-radius:8px;background:#5260f2"></div>
<div class="a" style="left:2606px;top:1334px;font-size:32px;line-height:42px;color:#fff;-webkit-text-stroke:0.35px #fff">保存</div>
<svg class="a" style="left:2672px;top:1347px" width="28" height="20" viewBox="0 0 28 20"><path d="M2 17 L14 4 L26 17" fill="none" stroke="#fff" stroke-width="2.8"/></svg>

<!-- floating right widgets -->
<div class="a" style="left:2828px;top:258px;width:40px;height:104px;background:#fff;box-shadow:-4px 3px 8px rgba(0,0,0,0.10)"></div>
<svg class="a" style="left:2840px;top:264px" width="28" height="64" viewBox="0 0 28 64">
  <defs><radialGradient id="rh" cx="0.6" cy="0.35" r="0.7"><stop offset="0" stop-color="#ffffff"/><stop offset="0.7" stop-color="#e4eaf8"/><stop offset="1" stop-color="#aebbe0"/></radialGradient></defs>
  <ellipse cx="30" cy="31.5" rx="26" ry="26.5" fill="url(#rh)"/>
  <ellipse cx="30.5" cy="37" rx="17" ry="16" fill="#0a1a78"/>
  <ellipse cx="30.5" cy="37" rx="17" ry="16" fill="none" stroke="#3f7cf0" stroke-width="1.2"/>
  <rect x="21" y="32" width="7" height="12" rx="2.5" fill="#6fd8ff"/>
  <path d="M5 22 Q3 30 6 37" stroke="#4a6fe0" stroke-width="3" fill="none"/>
</svg>
<div class="a" style="left:2841px;top:323px;font-size:22px;line-height:36px;color:#4f6cf0;font-weight:bold">小助</div>
<div class="a" style="left:2810px;top:476px;width:58px;height:74px;background:#fff;border-top:2px solid #e2e2e4;box-shadow:-3px 2px 7px rgba(0,0,0,0.10)"></div>
<svg class="a" style="left:2826px;top:497px" width="40" height="40" viewBox="0 0 24 24"><path d="M21.44 11.05l-9.19 9.19a6 6 0 0 1-8.49-8.49l9.19-9.19a4 4 0 0 1 5.66 5.66l-9.2 9.19a2 2 0 0 1-2.83-2.83l8.49-8.48" fill="none" stroke="#2a2a2a" stroke-width="1.45" stroke-linecap="round" stroke-linejoin="round"/></svg>
<div class="a" style="left:2810px;top:558px;width:58px;height:72px;background:#5862f0;box-shadow:-3px 4px 8px rgba(0,0,0,0.10)"></div>
<svg class="a" style="left:2824px;top:574px" width="44" height="44" viewBox="0 0 44 44">
  <rect x="3" y="3" width="39" height="39" rx="5" fill="none" stroke="#fff" stroke-width="2.3"/>
  <path d="M24.5 18.6 L35.6 8.3 M27 8.3 H35.6 V17 M19 25 L7.8 33.8 M7.8 23.5 V33.8 H20" fill="none" stroke="#fff" stroke-width="2"/>
</svg>



<!--CONTENT_END-->
</body></html>
